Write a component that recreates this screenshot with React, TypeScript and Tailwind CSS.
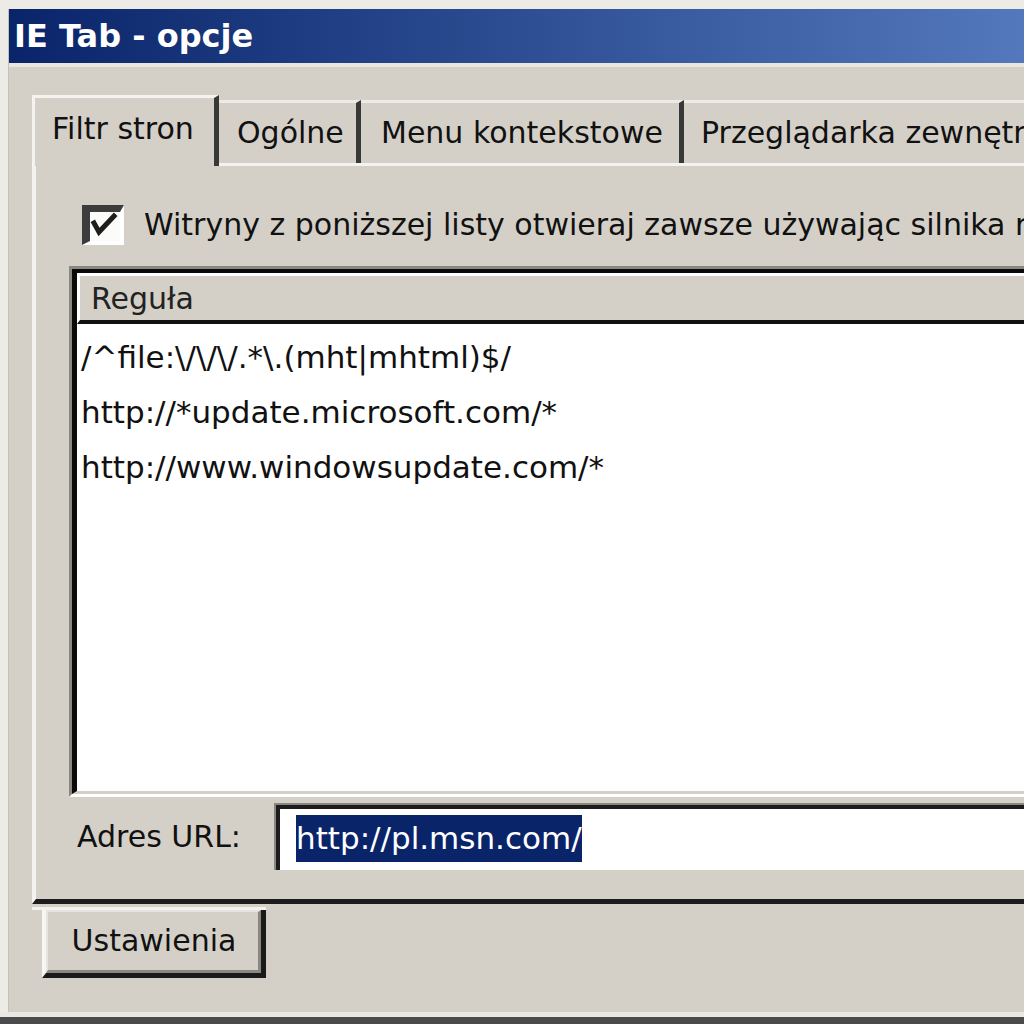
import React from "react";

const rules = [
  "/^file:\\/\\/\\/.*\\.(mht|mhtml)$/",
  "http://*update.microsoft.com/*",
  "http://www.windowsupdate.com/*",
];

const TitleBar = () => (
  <div className="h-[54px] shrink-0 flex items-center pl-[5px] bg-gradient-to-r from-[#0a246a] to-[#6388cb]">
    <span className="text-white font-bold text-[32px]">IE Tab - opcje</span>
  </div>
);

const Tabs = () => (
  <div className="flex items-end h-[68px] shrink-0">
    <div className="relative z-10 -mb-[3px] w-[187px] h-[71px] shrink-0 flex items-center pl-[17px] pb-[7px] bg-[#d4d0c8] border-t-[3px] border-l-[3px] border-t-[#f4f3ef] border-l-[#f4f3ef] border-r-[5px] border-r-[#383838]">
      Filtr stron
    </div>
    <div className="w-[142px] h-[63px] shrink-0 flex items-center pl-[18px] border-t-[3px] border-t-[#ecebe6] border-r-[5px] border-r-[#383838]">
      Ogólne
    </div>
    <div className="w-[323px] h-[63px] shrink-0 flex items-center pl-[20px] border-t-[3px] border-t-[#ecebe6] border-r-[5px] border-r-[#383838]">
      Menu kontekstowe
    </div>
    <div className="w-[420px] h-[63px] shrink-0 flex items-center pl-[17px] border-t-[3px] border-t-[#ecebe6] whitespace-nowrap">
      Przeglądarka zewnętrzna
    </div>
  </div>
);

const Checkbox = () => (
  <div className="w-[42px] h-[40px] shrink-0 bg-[#fbfbf9] border-t-[7px] border-l-[8px] border-t-[#3c3c3c] border-l-[#3c3c3c] border-r-[4px] border-b-[4px] border-r-white border-b-white">
    <svg width="30" height="29" viewBox="0 0 30 29">
      <polyline points="4,11 9,20 24,4" fill="none" stroke="#1e1e1e" strokeWidth="5" strokeLinecap="square" strokeLinejoin="miter" />
    </svg>
  </div>
);

const RuleList = () => (
  <div className="h-[531px] shrink-0 border-t-[3px] border-l-[3px] border-t-[#8a8780] border-l-[#8a8780] border-r-[3px] border-b-[3px] border-r-white border-b-white">
    <div className="h-full flex flex-col bg-white border-t-[4px] border-l-[5px] border-t-[#0a0a0a] border-l-[#0a0a0a] border-r-[3px] border-b-[3px] border-r-[#d4d0c8] border-b-[#d4d0c8]">
      <div className="h-[51px] shrink-0 flex items-center pl-[11px] pt-[2px] bg-[#d4d0c8] border-t-[3px] border-l-[3px] border-t-white border-l-white border-b-[4px] border-b-[#111]">
        <span className="text-[#222]">Reguła</span>
      </div>
      <div className="flex flex-col pt-[6px] pl-[4px] text-[31px]">
        {rules.map((r) => (
          <div key={r} className="h-[55px] flex items-center whitespace-nowrap">
            {r}
          </div>
        ))}
      </div>
    </div>
  </div>
);

const AddressRow = () => (
  <div className="flex items-stretch h-[67px] mt-[6px] shrink-0">
    <div className="w-[205px] shrink-0 flex items-center pl-[8px]">Adres URL:</div>
    <div className="flex-1 border-t-[2px] border-l-[2px] border-t-[#8a8780] border-l-[#8a8780]">
      <div className="h-full bg-white border-t-[4px] border-l-[4px] border-t-[#1c1c1c] border-l-[#1c1c1c] pl-[16px] pt-[6px]">
        <span className="inline-flex items-center h-[47px] bg-[#0a246a] text-white text-[31px] whitespace-nowrap">
          http://pl.msn.com/
        </span>
      </div>
    </div>
  </div>
);

const SettingsButton = () => (
  <div className="mt-[3px] flex shrink-0 border-t-[3px] border-t-[#f2f1ec] w-[234px]">
    <div className="ml-[10px] w-[224px] h-[68px] border-l-[4px] border-l-[#f7f6f2] border-r-[5px] border-b-[5px] border-r-[#1a1a1a] border-b-[#1a1a1a]">
      <div className="h-full flex items-center justify-center pl-[2px] border-t-[2px] border-l-[2px] border-t-[#e6e4de] border-l-[#e6e4de] border-r-[3px] border-b-[3px] border-r-[#8a8780] border-b-[#8a8780]">
        Ustawienia
      </div>
    </div>
  </div>
);

export default function App() {
  return (
    <div className="w-[1024px] h-[1024px] overflow-hidden flex flex-col bg-[#ecebe6] text-[30px] leading-none text-[#111] font-['DejaVu_Sans',sans-serif]">
      <div className="flex-1 flex flex-col pt-[9px] pl-[8px] min-h-0">
        <div className="flex-1 w-[1200px] flex flex-col bg-[#d4d0c8] border-l-[1px] border-l-[#c4c1ba]">
          <TitleBar />
          <div className="h-[4px] shrink-0 bg-[#e8e6df]" />
          <div className="flex-1 flex flex-col pt-[28px] pl-[23px]">
            <Tabs />
            <div className="flex flex-col shrink-0 pt-[39px] pl-[33px] pb-[29px] border-t-[3px] border-l-[4px] border-t-[#f4f3ef] border-l-[#f4f3ef] border-b-[5px] border-b-[#1c1c1c]">
              <div className="flex items-center gap-[20px] ml-[13px] h-[40px] shrink-0">
                <Checkbox />
                <span className="whitespace-nowrap">
                  Witryny z poniższej listy otwieraj zawsze używając silnika renderowania IE
                </span>
              </div>
              <div className="mt-[21px]">
                <RuleList />
              </div>
              <AddressRow />
            </div>
            <SettingsButton />
          </div>
        </div>
      </div>
      <div className="h-[5px] shrink-0 bg-[#e9e8e3]" />
      <div className="h-[7px] shrink-0 bg-[#4b4b4b]" />
    </div>
  );
}
